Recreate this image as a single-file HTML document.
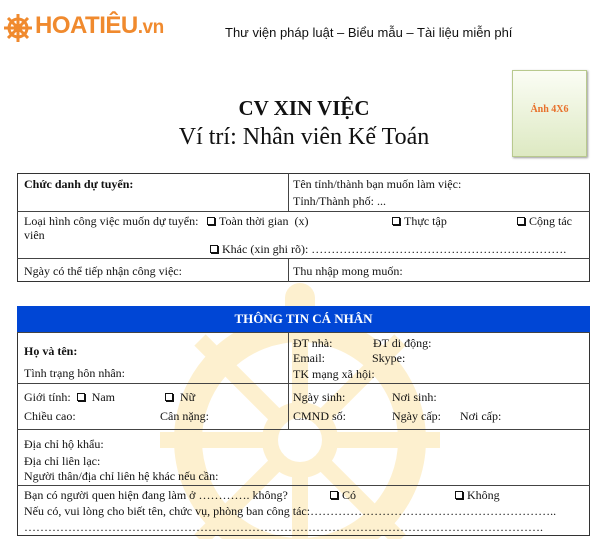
<!DOCTYPE html>
<html><head><meta charset="utf-8"><style>
*{margin:0;padding:0;box-sizing:border-box}
body{width:600px;height:539px;background:#fff;position:relative;overflow:hidden;font-family:"Liberation Serif",serif;font-size:12px;color:#111}
.a{position:absolute;white-space:nowrap}
.b{position:absolute;border:1.5px solid #333}
.h{position:absolute;height:1px;background:#444}
.v{position:absolute;width:1px;background:#444}
.bx{display:inline-block;width:8px;height:8px;border:1.3px solid #111;box-shadow:1px 1px 0 #111;margin-right:4px;vertical-align:0px}
</style></head><body>
<svg class="a" style="left:0;top:0" width="600" height="539">
<g stroke="#fdf0cf" fill="none">
<circle cx="300" cy="440" r="112" stroke-width="28"/>
<circle cx="300" cy="440" r="30" stroke-width="16"/>
<g stroke-width="16">
<line x1="300" y1="300" x2="300" y2="410"/><line x1="300" y1="470" x2="300" y2="580"/>
<line x1="160" y1="440" x2="270" y2="440"/><line x1="330" y1="440" x2="440" y2="440"/>
<line x1="200" y1="340" x2="279" y2="419"/><line x1="321" y1="461" x2="400" y2="540"/>
<line x1="400" y1="340" x2="321" y2="419"/><line x1="279" y1="461" x2="200" y2="540"/>
</g>
<g stroke-width="30" stroke-linecap="round"><line x1="300" y1="298" x2="300" y2="312"/></g>
</g>
</svg>
<svg class="a" style="left:3px;top:13px" width="30" height="30" viewBox="0 0 30 30">
<g stroke="#f08a2e" fill="none" stroke-width="3">
<circle cx="15" cy="15" r="9"/><circle cx="15" cy="15" r="3"/>
<line x1="15" y1="1" x2="15" y2="29"/><line x1="1" y1="15" x2="29" y2="15"/>
<line x1="5" y1="5" x2="25" y2="25"/><line x1="25" y1="5" x2="5" y2="25"/>
</g></svg>
<div class="a" style="left:35px;top:12px;font-family:'Liberation Sans',sans-serif;font-weight:bold;font-size:24px;color:#f08a2e;letter-spacing:-0.5px">HOATIÊU<span style="font-size:19px">.vn</span></div>
<div class="a" style="left:225px;top:25px;font-family:'Liberation Sans',sans-serif;font-size:13px;color:#111">Thư viện pháp luật – Biểu mẫu – Tài liệu miễn phí</div>
<div class="a" style="left:512px;top:70px;width:75px;height:87px;border:1px solid #b8c98e;background:linear-gradient(#fbfdf5,#dde9c2);box-shadow:1px 1px 2px #999"></div>
<div class="a" style="left:512px;top:104px;width:75px;text-align:center;font-weight:bold;font-size:10px;color:#e8702a">Ảnh 4X6</div>
<div class="a" style="left:0;width:608px;top:96px;text-align:center;font-weight:bold;font-size:21px">CV XIN VIỆC</div>
<div class="a" style="left:0;width:608px;top:124px;text-align:center;font-size:24px">Ví trí: Nhân viên Kế Toán</div>

<div class="b" style="left:17px;top:173px;width:573px;height:109px"></div>
<div class="h" style="left:17px;top:211px;width:573px"></div>
<div class="h" style="left:17px;top:258px;width:573px"></div>
<div class="v" style="left:288px;top:173px;height:38px"></div>
<div class="v" style="left:288px;top:258px;height:24px"></div>
<div class="a" style="left:24px;top:177px;font-weight:bold">Chức danh dự tuyển:</div>
<div class="a" style="left:293px;top:177px">Tên tỉnh/thành bạn muốn làm việc:</div>
<div class="a" style="left:293px;top:194px">Tỉnh/Thành phố: ...</div>
<div class="a" style="left:24px;top:214px">Loại hình công việc muốn dự tuyển:</div>
<div class="a" style="left:24px;top:228px">viên</div>
<div class="a" style="left:207px;top:214px"><span class="bx"></span>Toàn thời gian &nbsp;(x)</div>
<div class="a" style="left:392px;top:214px"><span class="bx"></span>Thực tập</div>
<div class="a" style="left:517px;top:214px"><span class="bx"></span>Cộng tác</div>
<div class="a" style="left:210px;top:242px"><span class="bx"></span>Khác (xin ghi rõ): ……………………………………………………….</div>
<div class="a" style="left:24px;top:264px">Ngày có thể tiếp nhận công việc:</div>
<div class="a" style="left:293px;top:264px">Thu nhập mong muốn:</div>

<div class="b" style="left:17px;top:306px;width:573px;height:230px"></div>
<div class="a" style="left:17px;top:306px;width:573px;height:26px;background:#0046d5;color:#fff;font-weight:bold;font-size:13px;text-align:center;line-height:26px">THÔNG TIN CÁ NHÂN</div>
<div class="h" style="left:17px;top:332px;width:573px"></div>
<div class="h" style="left:17px;top:383px;width:573px"></div>
<div class="h" style="left:17px;top:429px;width:573px"></div>
<div class="h" style="left:17px;top:485px;width:573px"></div>
<div class="v" style="left:288px;top:332px;height:97px"></div>
<div class="a" style="left:24px;top:344px;font-weight:bold">Họ và tên:</div>
<div class="a" style="left:24px;top:366px">Tình trạng hôn nhân:</div>
<div class="a" style="left:293px;top:336px">ĐT nhà:</div>
<div class="a" style="left:373px;top:336px">ĐT di động:</div>
<div class="a" style="left:293px;top:351px">Email:</div>
<div class="a" style="left:372px;top:351px">Skype:</div>
<div class="a" style="left:293px;top:367px">TK mạng xã hội:</div>
<div class="a" style="left:24px;top:390px">Giới tính: <span class="bx" style="margin-left:3px"></span> Nam</div>
<div class="a" style="left:165px;top:390px"><span class="bx"></span> Nữ</div>
<div class="a" style="left:24px;top:409px">Chiều cao:</div>
<div class="a" style="left:160px;top:409px">Cân nặng:</div>
<div class="a" style="left:293px;top:390px">Ngày sinh:</div>
<div class="a" style="left:392px;top:390px">Nơi sinh:</div>
<div class="a" style="left:293px;top:409px">CMND số:</div>
<div class="a" style="left:392px;top:409px">Ngày cấp:</div>
<div class="a" style="left:460px;top:409px">Nơi cấp:</div>
<div class="a" style="left:24px;top:437px">Địa chỉ hộ khẩu:</div>
<div class="a" style="left:24px;top:454px">Địa chỉ liên lạc:</div>
<div class="a" style="left:24px;top:469px">Người thân/địa chỉ liên hệ khác nếu cần:</div>
<div class="a" style="left:24px;top:488px">Bạn có người quen hiện đang làm ở …………. không?</div>
<div class="a" style="left:330px;top:488px"><span class="bx"></span>Có</div>
<div class="a" style="left:455px;top:488px"><span class="bx"></span>Không</div>
<div class="a" style="left:24px;top:504px">Nếu có, vui lòng cho biết tên, chức vụ, phòng ban công tác:……………………………………………………..</div>
<div class="a" style="left:24px;top:520px">………………………………………………………………………………………………………………….</div>
</body></html>
